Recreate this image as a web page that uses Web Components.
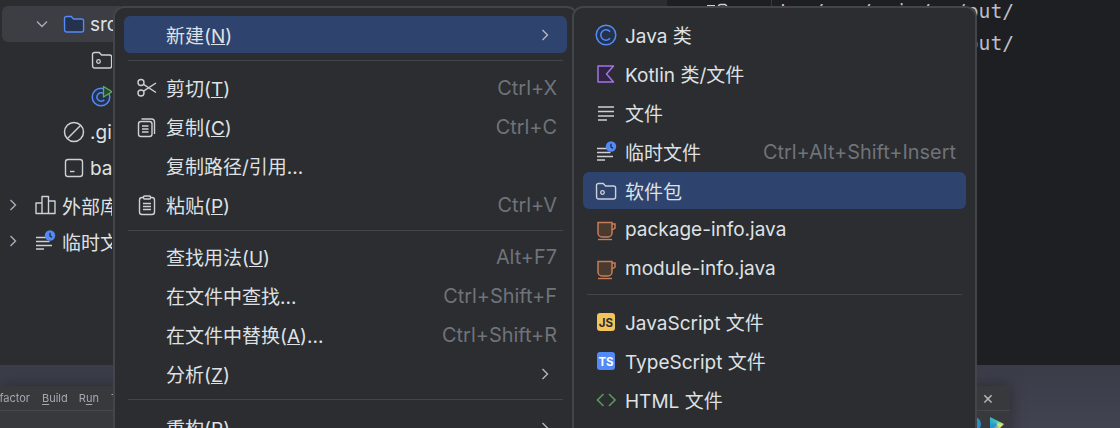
<!DOCTYPE html>
<html><head><meta charset="utf-8">
<style>
html,body{margin:0;padding:0;width:1120px;height:428px;overflow:hidden;background:#1e1f22}
body{font:19px Inter,"Noto Sans CJK SC",sans-serif;color:#dfe1e5}
</style></head><body>
<ide-app>
  <tree-panel slot="tree">
    <tree-row indent="1" chev="down" icon="folder" selected>src</tree-row>
    <tree-row indent="2" icon="pkg"></tree-row>
    <tree-row indent="2" icon="runclass"></tree-row>
    <tree-row indent="1" icon="ignore">.gi</tree-row>
    <tree-row indent="1" icon="bat">ba</tree-row>
    <tree-row indent="0" chev="right" icon="lib" style="margin-top:1px">外部库</tree-row>
    <tree-row indent="0" chev="right" icon="scratch">临时文</tree-row>
  </tree-panel>
  <editor-pane slot="editor"></editor-pane>
  <desktop-band slot="band"></desktop-band>
  <ctx-menu slot="menus" style="left:113px;top:6px;width:465px">
    <menu-item hl sub>新建(<u>N</u>)</menu-item>
    <menu-sep></menu-sep>
    <menu-item icon="cut" key="Ctrl+X">剪切(<u>T</u>)</menu-item>
    <menu-item icon="copy" key="Ctrl+C">复制(<u>C</u>)</menu-item>
    <menu-item>复制路径/引用...</menu-item>
    <menu-item icon="paste" key="Ctrl+V">粘贴(<u>P</u>)</menu-item>
    <menu-sep style="height:11px"></menu-sep>
    <menu-item key="Alt+F7">查找用法(<u>U</u>)</menu-item>
    <menu-item key="Ctrl+Shift+F">在文件中查找...</menu-item>
    <menu-item key="Ctrl+Shift+R">在文件中替换(<u>A</u>)...</menu-item>
    <menu-item sub>分析(<u>Z</u>)</menu-item>
    <menu-sep style="height:13px"></menu-sep>
    <menu-item sub>重构(<u>R</u>)</menu-item>
  </ctx-menu>
  <ctx-menu slot="menus" style="left:572px;top:6px;width:405px">
    <menu-item icon="java">Java 类</menu-item>
    <menu-item icon="kotlin">Kotlin 类/文件</menu-item>
    <menu-item icon="file">文件</menu-item>
    <menu-item icon="scratch" key="Ctrl+Alt+Shift+Insert">临时文件</menu-item>
    <menu-item icon="pkg" hl>软件包</menu-item>
    <menu-item icon="cup">package-info.java</menu-item>
    <menu-item icon="cup">module-info.java</menu-item>
    <menu-sep></menu-sep>
    <menu-item icon="js">JavaScript 文件</menu-item>
    <menu-item icon="ts">TypeScript 文件</menu-item>
    <menu-item icon="html">HTML 文件</menu-item>
    <menu-item icon="css"></menu-item>
  </ctx-menu>
</ide-app>
<script>
const ICONS={
 folder:'<path d="M1.500 5.500a2 2 0 0 1 2-2h4.700l2.400 2.500h8a2 2 0 0 1 2 2v9a2 2 0 0 1-2 2h-15a2 2 0 0 1-2-2z" fill="#25324d" stroke="#548af7" stroke-width="1.400"/>',
 pkg:'<path d="M1.500 5.500a2 2 0 0 1 2-2h4.700l2.400 2.500h8a2 2 0 0 1 2 2v9a2 2 0 0 1-2 2h-15a2 2 0 0 1-2-2z" fill="none" stroke="#ced0d6" stroke-width="1.400"/><circle cx="7.500" cy="12.500" r="1.800" fill="none" stroke="#ced0d6" stroke-width="1.300"/>',
 runclass:'<circle cx="10" cy="12" r="8.800" fill="#25324d" stroke="#548af7" stroke-width="1.500"/><path d="M13.300 9.300a4.200 4.200 0 1 0 0 5.400" fill="none" stroke="#548af7" stroke-width="1.500"/><path d="M12.500 1.500v10.500l8.500-5.200z" fill="#2a4a2c" stroke="#5fad65" stroke-width="1.300" stroke-linejoin="round"/>',
 ignore:'<circle cx="11" cy="11" r="9.500" fill="none" stroke="#ced0d6" stroke-width="1.500"/><path d="M4.500 17.500 17.500 4.500" stroke="#ced0d6" stroke-width="1.500"/>',
 bat:'<rect x="2.500" y="2.500" width="17" height="17" rx="2.500" fill="none" stroke="#ced0d6" stroke-width="1.400"/><path d="M7 14.500h4.500" stroke="#ced0d6" stroke-width="1.400"/>',
 lib:'<path d="M2 9h6v10.500H2zM8 2.500h6.500v17H8zM14.500 7H21v12.500h-6.500z" fill="none" stroke="#ced0d6" stroke-width="1.400" stroke-linejoin="round"/>',
 scratch:'<path d="M2 7.500h11M2 11.500h13.500M2 15.500h16M2 19h8" stroke="#ced0d6" stroke-width="1.400" fill="none"/><circle cx="16" cy="5.500" r="5.200" fill="#548af7"/><path d="M16 2.800V6l2 1.300" stroke="#1e1f22" stroke-width="1.200" fill="none"/>',
 cut:'<circle cx="5" cy="5.500" r="3" fill="none" stroke="#ced0d6" stroke-width="1.400"/><circle cx="5" cy="16" r="3" fill="none" stroke="#ced0d6" stroke-width="1.400"/><path d="M7.500 7.300 20 15.500M7.500 14.200 20 6" stroke="#ced0d6" stroke-width="1.400" fill="none"/>',
 copy:'<rect x="2.500" y="5.500" width="13.500" height="15" rx="2.500" fill="none" stroke="#ced0d6" stroke-width="1.400"/><path d="M5.500 3h10a3 3 0 0 1 3 3v12" fill="none" stroke="#ced0d6" stroke-width="1.400"/><path d="M6 10h6.500M6 13h6.500M6 16h6.500" stroke="#ced0d6" stroke-width="1.400"/>',
 paste:'<rect x="3.500" y="3.500" width="15" height="17" rx="2.500" fill="none" stroke="#ced0d6" stroke-width="1.400"/><rect x="7.500" y="2" width="7" height="3" rx="1" fill="#2b2d30" stroke="#ced0d6" stroke-width="1.400"/><path d="M7 9.500h8M7 12.500h8M7 15.500h8" stroke="#ced0d6" stroke-width="1.400"/>',
 java:'<circle cx="11" cy="11" r="9.800" fill="#25324d" stroke="#548af7" stroke-width="1.500"/><path d="M15 7.700a5.200 5.200 0 1 0 0 6.600" fill="none" stroke="#548af7" stroke-width="1.500"/>',
 kotlin:'<path d="M3 3h15.500l-7 8 7 8H3z" fill="#2f2543" stroke="#a571e6" stroke-width="1.500" stroke-linejoin="round"/>',
 file:'<path d="M3 5h16M3 9.500h16M3 14h16M3 18h9" stroke="#ced0d6" stroke-width="1.400" fill="none"/>',
 cup:'<path d="M3 3.500h14V14a4 4 0 0 1-4 4H7a4 4 0 0 1-4-4z" fill="#4a3a30" stroke="#c77d55" stroke-width="1.500"/><path d="M17 5h3v4l-3 2" fill="none" stroke="#c77d55" stroke-width="1.500"/><path d="M3 20.500h14" stroke="#c77d55" stroke-width="1.400"/>',
 js:'<rect x="2" y="2" width="18" height="18" rx="3" fill="#f2c55c"/><text x="11" y="15.500" font-size="11.500" font-weight="700" text-anchor="middle" fill="#2b2d30" font-family="Inter">JS</text>',
 ts:'<rect x="2" y="2" width="18" height="18" rx="3" fill="#548af7"/><text x="11" y="15.500" font-size="11.500" font-weight="700" text-anchor="middle" fill="#fff" font-family="Inter">TS</text>',
 html:'<path d="M8.500 5 2.500 11l6 6M14 5l6 6-6 6" fill="none" stroke="#57965c" stroke-width="1.700"/>',
 css:'<rect x="2" y="2" width="18" height="18" rx="3" fill="#2e3a8c"/>'
};
function svg(n,s=22){return n?`<svg width="${s}" height="${s}" viewBox="0 0 22 22">${ICONS[n]}</svg>`:''}
function def(name,css,html){
  customElements.define(name,class extends HTMLElement{
    connectedCallback(){
      if(this.shadowRoot)return;
      const r=this.attachShadow({mode:'open'});
      r.innerHTML=`<style>${css}</style>`+(typeof html==='function'?html(this):html);
    }
  });
}
def('ide-app',`
 :host{display:grid;width:1120px;height:428px;grid-template-columns:667px 1fr;grid-template-rows:365px 63px;position:relative;overflow:hidden}
 .b{grid-column:1/3;display:block}
`,`<slot name="tree"></slot><slot name="editor"></slot><div class="b"><slot name="band"></slot></div><slot name="menus"></slot>`);
def('tree-panel',`:host{display:flex;flex-direction:column;background:#2b2d30;overflow:hidden;padding-top:6px;box-sizing:border-box;height:365px}`,`<slot></slot>`);
def('tree-row',`
 :host{display:flex;align-items:center;height:36px;width:112px;overflow:hidden;flex:none;box-sizing:border-box;white-space:nowrap}
 :host([selected]){background:#3c3e43;border-radius:6px 0 0 6px;margin-left:2px;width:118px}
 .c{width:16px;height:16px;display:flex;flex:none}
 .i{width:22px;height:22px;flex:none}
 svg{display:block}
`,h=>{
 const lvl=+h.getAttribute('indent'),ch=h.getAttribute('chev');
 const sel=h.hasAttribute('selected')?2:0;
 const pad=[5,34,62][lvl]-sel;
 const chev=ch=='down'?'<path d="M3 5.500l5 5 5-5" fill="none" stroke="#a8adbd" stroke-width="1.400"/>':ch=='right'?'<path d="M5.500 3l5 5-5 5" fill="none" stroke="#a8adbd" stroke-width="1.400"/>':'';
 return `<span style="width:${pad}px;flex:none"></span><span class="c" style="${lvl==2?'visibility:hidden':''}"><svg width="16" height="16" viewBox="0 0 16 16">${chev}</svg></span><span style="width:${ch?13:0}px;flex:none"></span><span class="i" style="margin-left:${ch?0:13}px;margin-right:${ch=='right'?6:5}px">${svg(h.getAttribute('icon'))}</span><slot></slot>`;
});
def('editor-pane',`
 :host{display:flex;flex-direction:column;background:#1e1f22;overflow:hidden;font:19.700px "DejaVu Sans Mono",monospace;color:#bcbec4}
 .g{display:grid;grid-template-columns:105px 1fr;flex:1}
 .gut{border-right:1px solid #393b40;display:flex;align-items:flex-start;padding:2px 0 0 40px;box-sizing:border-box;gap:2px}
 .m{width:8px;height:1.400px;background:#ced0d6;margin-top:3px;flex:none}
 .gut svg{flex:none;margin-top:-1px}
 .t{padding-top:1px}
 .l{height:32px;line-height:22px;padding-left:5px;white-space:pre}
 .l b{font-weight:400;vertical-align:-8px;line-height:0}
`,`<div class="g"><div class="gut"><span class="m"></span><svg width="22" height="22" viewBox="0 0 22 22">${ICONS.pkg}</svg></div><div class="t"><div class="l">!<b>**</b>/src/main/<b>**</b>/out/</div><div class="l">!<b>**</b>/src/test/<b>**</b>/out/</div></div></div>`);
def('desktop-band',`
 :host{display:block;height:63px;background:linear-gradient(#3a3c48,#414350);padding-top:21px;box-sizing:border-box;overflow:hidden}
 .w{width:1010px;height:60px;background:#37393d;box-shadow:0 0 14px rgba(0,0,0,.35);filter:blur(.5px);color:#a6a8ad;font:11px Inter,sans-serif}
 .m{height:24px;border-bottom:1px solid #45474c;display:flex;align-items:center;justify-content:space-between;padding-right:16px}
 .n{display:flex;width:113px;justify-content:flex-end;gap:12px;overflow:hidden;white-space:nowrap}
 .n span{flex:none}
 u{text-underline-offset:2px}
 .x{font-size:18px;line-height:1;color:#b0b2b6}
 .ic{display:flex;justify-content:flex-end;gap:9px;padding:6px 6px 0 0}
 .d{width:14px;height:14px;border-radius:50%;background:#2a8fc7}
 .e{width:14px;height:14px;background:conic-gradient(#3fd0c0,#e9e36a,#2a8fc7,#3fd0c0);clip-path:polygon(0 0,100% 50%,50% 100%,0 100%)}
`,`<div class="w"><div class="m"><div class="n"><span>Refactor</span><span style="margin-right:-1px"><u>B</u>uild</span><span>R<u>u</u>n</span><span style="margin-right:-5px">T</span></div><span class="x">×</span></div><div class="ic"><span class="d"></span><span class="e"></span></div></div>`);
def('ctx-menu',`
 :host{position:absolute;display:block;height:500px;box-sizing:border-box;background:#2b2d30;border:2px solid #43454a;border-radius:11px;padding:6px 9px;font:19px Inter,"Noto Sans CJK SC",sans-serif;color:#dfe1e5}
`,`<slot></slot>`);
def('menu-item',`
 :host{display:flex;align-items:center;height:37px;margin:2px 0;border-radius:6px;padding:0 10px 0 12px;white-space:nowrap;box-sizing:border-box}
 :host([hl]){background:#2e436e}
 .i{width:22px;height:22px;flex:none;margin-right:8px}
 .s{flex:1}
 .k{color:#6f737a;font-size:19.900px}
 .c{flex:none;margin-left:auto;margin-right:4px;display:flex}
 svg{display:block}
`,h=>`<span class="i">${svg(h.getAttribute('icon'))}</span><span class="s"><slot></slot></span>${h.hasAttribute('key')?`<span class="k">${h.getAttribute('key')}</span>`:''}${h.hasAttribute('sub')?`<span class="c"><svg width="16" height="16" viewBox="0 0 16 16"><path d="M5.500 3l5 5-5 5" fill="none" stroke="#b4b8bf" stroke-width="1.400"/></svg></span>`:''}`);
def('menu-sep',`:host{display:block;height:12px;padding:5px 4px 0;box-sizing:border-box}div{height:1px;background:#43454a}`,`<div></div>`);
</script>
</body></html>
